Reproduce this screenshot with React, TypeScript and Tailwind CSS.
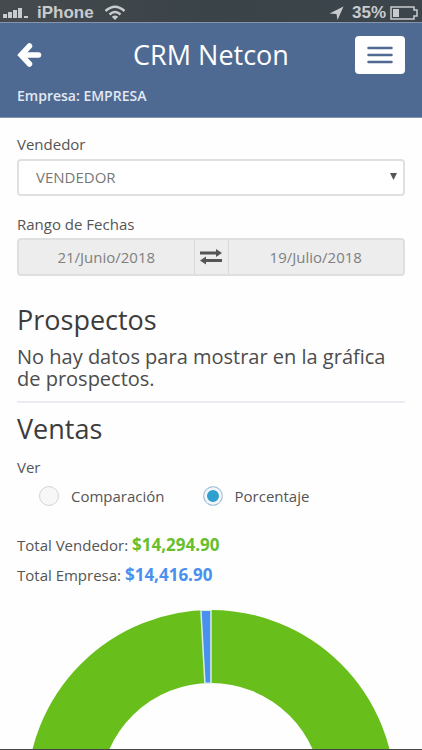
import { useState } from "react";

function StatusBar() {
  return (
    <div className="flex h-[22px] shrink-0 items-center justify-between bg-gradient-to-r from-[#454a4e] via-[#3a4348] to-[#3c454b] pt-1 pr-1 pl-[3px] font-['Liberation_Sans',Arial,sans-serif] text-[17px] leading-5 font-bold text-[#c9ccce]">
      <div className="flex items-center">
        <svg width="26" height="12" viewBox="0 0 26 12" fill="currentColor" aria-hidden="true">
          <rect x="0" y="7" width="4" height="4" />
          <rect x="5" y="5" width="4" height="6" />
          <rect x="10" y="3" width="4" height="8" />
          <rect x="15" y="1" width="4" height="10" />
          <rect x="21" y="9" width="4" height="2" />
        </svg>
        <span className="ml-2">iPhone</span>
        <svg className="ml-2.5" width="22" height="16" viewBox="0 0 22 16" fill="none" stroke="currentColor" aria-hidden="true">
          <path d="M1.500 6 Q11 -2.600 20.500 6" strokeWidth="2.400" />
          <path d="M5.500 9.500 Q11 4.500 16.500 9.500" strokeWidth="2.400" />
          <path d="M11 15 L7.800 11.800 Q11 9.300 14.200 11.800 Z" fill="currentColor" stroke="none" />
        </svg>
      </div>
      <div className="flex items-center">
        <svg width="15" height="15" viewBox="0 0 15 15" fill="currentColor" aria-hidden="true">
          <path d="M14.500 0.500 L8.500 14 L7.500 8 L0.500 7.500 Z" />
        </svg>
        <span className="ml-2">35%</span>
        <svg className="ml-1" width="28" height="14" viewBox="0 0 28 14" aria-hidden="true">
          <path d="M1 1 H24 V4 H27 V10 H24 V13 H1 Z" fill="none" stroke="currentColor" strokeWidth="1.500" />
          <rect x="3" y="3" width="6" height="8" fill="currentColor" />
        </svg>
      </div>
    </div>
  );
}

function Header() {
  return (
    <header className="shrink-0 border-y border-[#8594ad] bg-[#4e6a92] px-[17px] pt-3 pb-[11px] text-white">
      <div className="flex h-10 items-center justify-between">
        <button type="button" aria-label="Volver" className="flex w-[50px] items-center">
          <svg width="27" height="26" viewBox="0 0 27 26" fill="none" stroke="currentColor" strokeWidth="5.500" aria-hidden="true">
            <path d="M12.500 4 L4 13 L12.500 22" strokeLinecap="round" strokeLinejoin="miter" />
            <path d="M5 13 H21.500" strokeLinecap="round" />
          </svg>
        </button>
        <h1 className="text-[27px] leading-10">CRM Netcon</h1>
        <button type="button" aria-label="Menú" className="flex h-[38px] w-[50px] items-center justify-center rounded bg-white text-[#4e6a92]">
          <svg width="26" height="18" viewBox="0 0 26 18" stroke="currentColor" strokeWidth="2.500" strokeLinecap="round" aria-hidden="true">
            <path d="M1.500 2 H24.500 M1.500 9 H24.500 M1.500 16 H24.500" />
          </svg>
        </button>
      </div>
      <p className="mt-[11px] text-sm leading-5 font-semibold text-[#e3e8f2]">Empresa: EMPRESA</p>
    </header>
  );
}

function DonutChart() {
  return (
    <svg className="mx-auto mt-5 w-[368px] shrink-0" width="368" height="368" viewBox="0 0 368 368" role="img" aria-label="Porcentaje de ventas">
      <circle cx="184" cy="184" r="147.500" fill="none" stroke="#68be1b" strokeWidth="73" />
      <path d="M184 0 A184 184 0 0 0 173.900 0.300 L177.900 73.200 A111 111 0 0 1 184 73 Z" fill="#4a90ee" stroke="#d5f0e0" strokeWidth="1.500" />
    </svg>
  );
}

const radioClass =
  "size-5 appearance-none rounded-full border border-[#d3d3d8] bg-[#f7f7f7] checked:border-[#c3cbd8] checked:bg-[#2f9fcd] checked:shadow-[inset_0_0_0_3px_#f4f6fb]";
const dateClass =
  "h-full w-0 flex-1 bg-transparent text-center text-[15px] text-[#808080] outline-none";

export default function App() {
  const [view, setView] = useState("porcentaje");
  return (
    <div className="flex h-screen flex-col overflow-hidden border-b border-[#444] bg-[#fefefe] font-['Open_Sans',sans-serif] text-[#555]">
      <StatusBar />
      <Header />
      <main className="flex flex-col px-[17px] pt-4">
        <label htmlFor="vendedor" className="text-[15px] leading-5">Vendedor</label>
        <div className="relative mt-[5px]">
          <select id="vendedor" className="block h-[37px] w-full appearance-none rounded border-2 border-[#e0e0e0] bg-white px-[17px] text-[15px] text-[#777] outline-none">
            <option>VENDEDOR</option>
          </select>
          <svg className="pointer-events-none absolute top-[14px] right-2" width="7" height="7" viewBox="0 0 7 7" fill="#555" aria-hidden="true">
            <path d="M0 0 H7 L3.500 7 Z" />
          </svg>
        </div>
        <label htmlFor="desde" className="mt-[18px] text-[15px] leading-5">Rango de Fechas</label>
        <div className="mt-1 flex h-[38px] items-center rounded border-2 border-[#dfdfdf] bg-[#ededed]">
          <input id="desde" aria-label="Fecha inicial" readOnly value="21/Junio/2018" className={dateClass} />
          <div className="flex h-full w-[35px] items-center justify-center border-x border-[#d8d8d8]">
            <svg width="22" height="16" viewBox="0 0 22 16" fill="#555" aria-hidden="true">
              <path d="M0 2.500 H16 V0 L22 4 L16 8 V5.500 H0 Z" />
              <path d="M22 13 H6 V15.500 L0 11.500 L6 7.500 V10 H22 Z" />
            </svg>
          </div>
          <input aria-label="Fecha final" readOnly value="19/Julio/2018" className={dateClass} />
        </div>

        <h2 className="mt-[26px] text-[27px] leading-9 text-[#3c3c3c]">Prospectos</h2>
        <p className="mt-2 text-xl leading-[22px] text-[#4c4c4c]">
          No hay datos para mostrar en la gráfica de prospectos.
        </p>
        <hr className="mt-[11px] border-t-2 border-[#ebebf5]" />
        <h2 className="mt-2 text-[27px] leading-9 text-[#3c3c3c]">Ventas</h2>
        <fieldset className="mt-2.5">
          <legend className="text-[15px] leading-5">Ver</legend>
          <div className="mt-[9px] ml-[22px] flex gap-[38px] text-[15px] leading-5">
            <label className="flex items-center gap-3">
              <input type="radio" name="ver" className={radioClass} checked={view === "comparacion"} onChange={() => setView("comparacion")} />
              Comparación
            </label>
            <label className="flex items-center gap-3">
              <input type="radio" name="ver" className={radioClass} checked={view === "porcentaje"} onChange={() => setView("porcentaje")} />
              Porcentaje
            </label>
          </div>
        </fieldset>
        <p className="mt-6 text-[15px] leading-[30px]">
          Total Vendedor: <strong className="text-[17px] leading-none text-[#68be2c]">$14,294.90</strong>
        </p>
        <p className="text-[15px] leading-[30px]">
          Total Empresa: <strong className="text-[17px] leading-none text-[#4a90ee]">$14,416.90</strong>
        </p>
        <DonutChart />
      </main>
    </div>
  );
}
